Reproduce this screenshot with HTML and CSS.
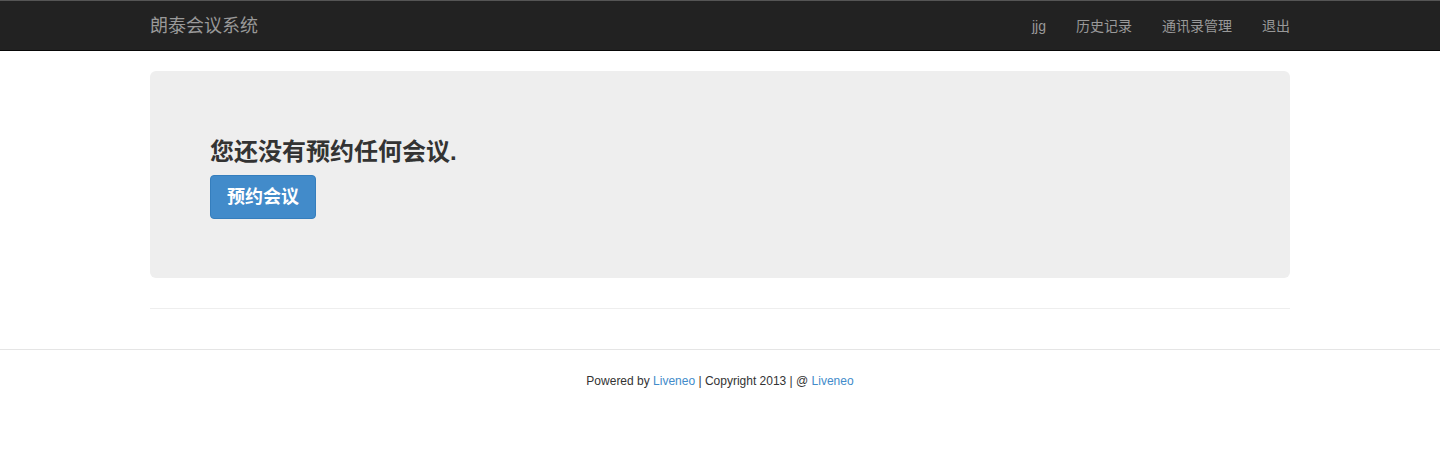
FILE: index.html
```html
<!DOCTYPE html>
<html lang="zh-CN">
<head>
<meta charset="utf-8">
<title>朗泰会议系统</title>
<link rel="stylesheet" href="styles.css">
</head>
<body>
<nav class="navbar">
  <div class="container nav-inner">
    <a class="brand" href="#">朗泰会议系统</a>
    <ul class="nav-links">
      <li><a href="#">jjg</a></li>
      <li><a href="#">历史记录</a></li>
      <li><a href="#">通讯录管理</a></li>
      <li><a href="#">退出</a></li>
    </ul>
  </div>
</nav>
<main class="container">
  <section class="jumbotron">
    <h3 class="title">您还没有预约任何会议.</h3>
    <a class="btn" href="#">预约会议</a>
  </section>
  <hr class="rule">
</main>
<footer class="footer">
  <p>Powered by <a href="#">Liveneo</a> | Copyright 2013 | @ <a href="#">Liveneo</a></p>
</footer>
</body>
</html>
```
FILE: styles.css
```css
* { box-sizing: border-box; }
html, body { margin: 0; padding: 0; }
body {
  font-family: "Liberation Sans", Arial, "Noto Sans CJK SC", sans-serif;
  font-size: 14px;
  line-height: 1.428;
  color: #333;
  background: #fff;
}
a { text-decoration: none; }
.container {
  width: 1140px;
  margin: 0 auto;
}
.navbar {
  background: #222;
  border-top: 1px solid #555;
  border-bottom: 1px solid #080808;
  height: 51px;
}
.nav-inner {
  display: flex;
  justify-content: space-between;
  align-items: center;
  height: 49px;
}
.brand {
  font-size: 18px;
  color: #999;
  line-height: 20px;
  margin-top: 0;
}
.nav-links {
  display: flex;
  list-style: none;
  margin: 0 -15px 0 0;
  padding: 0;
}
.nav-links a {
  display: block;
  padding: 0 15px;
  color: #999;
  font-size: 14px;
  line-height: 20px;
}
.jumbotron {
  margin-top: 20px;
  background: #eee;
  border-radius: 6px;
  padding: 48px 60px 59px;
}
.title {
  margin: 20px 0 10px;
  font-size: 24px;
  font-weight: bold;
  line-height: 26px;
  color: #333;
}
.btn {
  display: inline-block;
  height: 44px;
  padding: 0 16px;
  font-size: 18px;
  font-weight: bold;
  line-height: 42px;
  color: #fff;
  background: #428bca;
  border: 1px solid #357ebd;
  border-radius: 4px;
}
.rule {
  margin: 30px 0 0;
  border: 0;
  border-top: 1px solid #eee;
  height: 0;
}
.footer {
  margin-top: 40px;
  border-top: 1px solid #e5e5e5;
  text-align: center;
  font-size: 12px;
  color: #333;
}
.footer p {
  margin: 23px 0 0;
  line-height: 17px;
}
.footer a { color: #428bca; }
```
